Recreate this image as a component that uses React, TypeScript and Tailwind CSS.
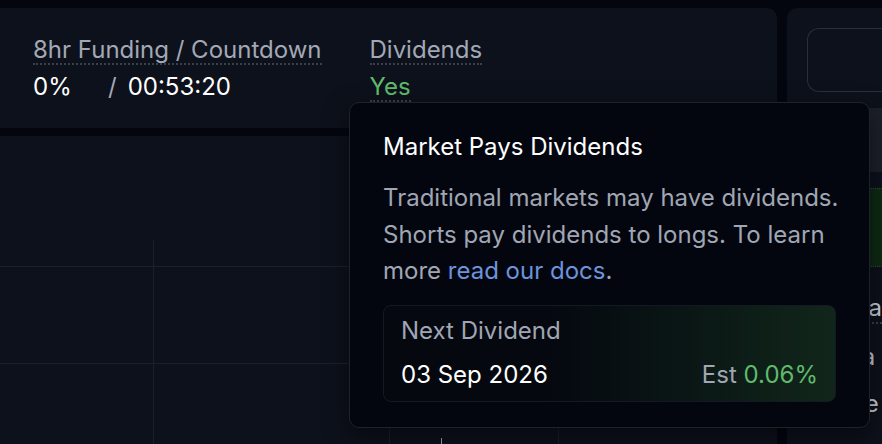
import React from 'react';

function StatBlock({ label, children }: { label: string; children: React.ReactNode }) {
  return (
    <div className="flex flex-col gap-[9px]">
      <span className="self-start border-b-2 border-dotted border-[#3a3f4c] text-[24px] leading-[26px] text-[#a3a8b6]">
        {label}
      </span>
      {children}
    </div>
  );
}

function ChartGrid() {
  return (
    <svg className="absolute inset-0 h-full w-full" width="795" height="308">
      <line x1="0" y1="130.5" x2="795" y2="130.5" stroke="#1c2029" strokeWidth="1" />
      <line x1="0" y1="227.5" x2="795" y2="227.5" stroke="#1c2029" strokeWidth="1" />
      <line x1="153.5" y1="104" x2="153.5" y2="308" stroke="#1c2029" strokeWidth="1" />
      <line x1="389.5" y1="104" x2="389.5" y2="308" stroke="#1c2029" strokeWidth="1" />
      <line x1="558.5" y1="104" x2="558.5" y2="308" stroke="#1c2029" strokeWidth="1" />
      <line x1="441.5" y1="302" x2="441.5" y2="308" stroke="#9aa0ad" strokeWidth="1" />
    </svg>
  );
}

function DividendTooltip() {
  return (
    <div className="absolute left-[349px] top-[102px] flex h-[326px] w-[521px] flex-col rounded-[10px] border border-[#1e222c] bg-[#04060f] pl-[33px] pr-[16px] pt-[29px] shadow-[0_8px_24px_rgba(0,0,0,0.5)]">
      <h3 className="text-[24px] leading-[30px] text-white">Market Pays Dividends</h3>
      <p className="mt-[18px] whitespace-nowrap text-[24px] leading-[36.5px] text-[#a0a6b4]">
        Traditional markets may have dividends.
        <br />
        Shorts pay dividends to longs. To learn
        <br />
        more <a className="text-[#6d93dc]">read our docs</a>.
      </p>
      <div className="mr-[17px] mt-[15px] flex h-[97px] flex-col justify-center gap-[16px] rounded-[8px] border border-[#151923] bg-gradient-to-r from-[#05080f] from-35% to-[#11261a] px-[17px]">
        <span className="text-[24px] leading-[28px] text-[#a0a6b4]">Next Dividend</span>
        <div className="flex items-center justify-between text-[24px] leading-[28px]">
          <span className="text-white">03 Sep 2026</span>
          <span className="text-[#a0a6b4]">
            Est <span className="text-[#5fba6c]">0.06%</span>
          </span>
        </div>
      </div>
    </div>
  );
}

export default function App() {
  return (
    <div
      className="relative h-[444px] w-[882px] overflow-hidden bg-[#04060f]"
      style={{ fontFamily: 'Inter, "Noto Sans", sans-serif' }}
    >
      <div className="flex h-full gap-[10px] pt-2">
        <div className="flex w-[795px] flex-col gap-2">
          <div className="flex h-[120px] gap-[48px] rounded-r-[10px] bg-[#0d111b] pl-[33px] pt-[29px]">
            <StatBlock label="8hr Funding / Countdown">
              <div className="flex text-[24px] leading-[26px] text-white">
                <span className="w-[75px]">0%</span>
                <span className="text-[#a3a8b6]">/</span>
                <span className="ml-[11px]">00:53:20</span>
              </div>
            </StatBlock>
            <StatBlock label="Dividends">
              <span className="self-start border-b-2 border-dotted border-[#3a3f4c] text-[24px] leading-[26px] text-[#5fba6c]">
                Yes
              </span>
            </StatBlock>
          </div>
          <div className="relative flex-1 rounded-tr-[10px] bg-[#0d111b]">
            <ChartGrid />
          </div>
        </div>

        <div className="flex flex-1 flex-col rounded-tl-[10px] bg-[#0d111b] pl-[20px] pt-[20px]">
          <div className="h-[64px] rounded-l-[12px] border border-r-0 border-[#2a2f3b]" />
          <div className="-ml-[20px] mt-[16px] h-[64px] bg-[#1c2029]" />
          <div className="-ml-[20px] mt-[16px] h-[79px] border-y border-dotted border-[#2f4a33] bg-[#0e2a14]" />
          <div className="-ml-[20px] mt-[27px] flex flex-col gap-[19px] pl-[54px] text-[24px] leading-[28px] text-[#c9cdd6]">
            <span className="self-start border-b-2 border-dotted border-[#3a3f4c]">Lea</span>
            <span>Pla</span>
            <span>Pre</span>
          </div>
        </div>
      </div>

      <DividendTooltip />
    </div>
  );
}
